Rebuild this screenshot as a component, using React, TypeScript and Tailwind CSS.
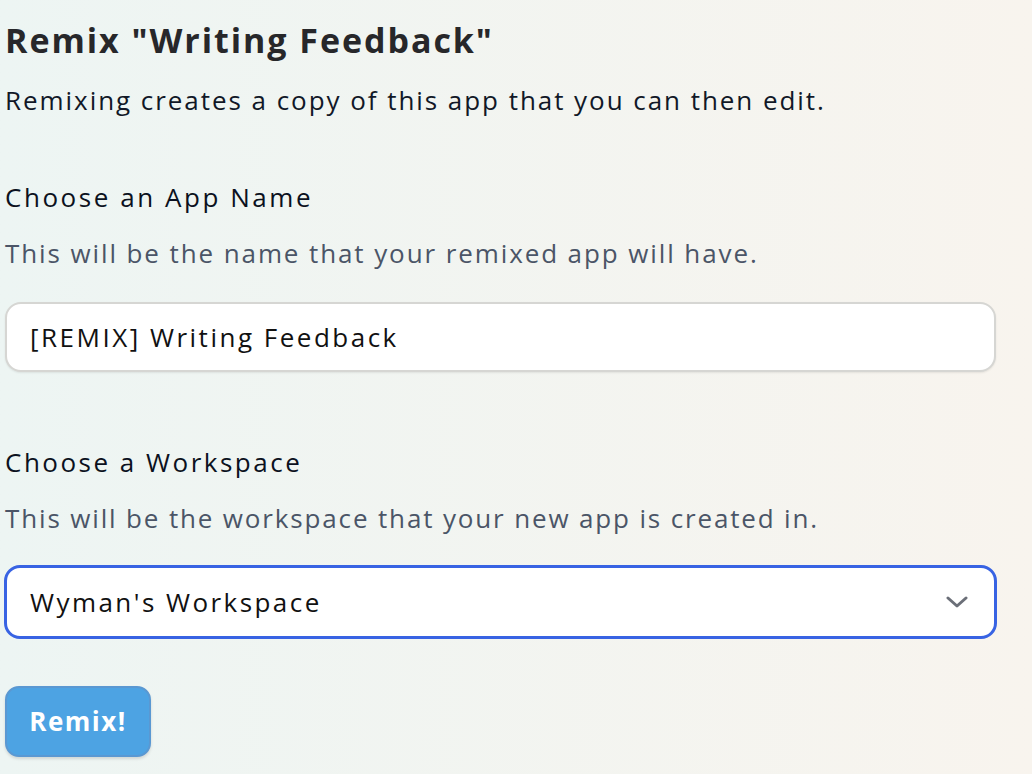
import React from "react";

export default function App() {
  const font = { fontFamily: '"Open Sans", "Liberation Sans", sans-serif' };
  return (
    <div
      className="min-h-screen w-full bg-gradient-to-r from-[#edf5f3] to-[#f8f4ee] pl-[5px] pr-[36px]"
      style={font}
    >
      <div className="flex flex-col">
        <h1 className="mt-[20px] h-[40px] text-[34px] leading-[40px] font-bold text-[#27272a] tracking-[1.95px]">
          Remix "Writing Feedback"
        </h1>
        <p className="mt-[22px] h-[36px] text-[26px] leading-[36px] text-[#111827] tracking-[1.95px]">
          Remixing creates a copy of this app that you can then edit.
        </p>

        <h2 className="mt-[61px] h-[36px] text-[26px] leading-[36px] font-medium text-[#0b1120] tracking-[2.55px]">
          Choose an App Name
        </h2>
        <p className="mt-[20px] h-[36px] text-[26px] leading-[36px] text-[#4b5567] tracking-[1.9px]">
          This will be the name that your remixed app will have.
        </p>
        <div className="mt-[31px] flex h-[70px] w-[991px] items-center rounded-[16px] border-2 border-[#d6d6d3] bg-white pl-[23px] shadow-[0_1px_2px_rgba(0,0,0,0.08)]">
          <span className="text-[26px] text-[#111111] tracking-[2.5px]">[REMIX] Writing Feedback</span>
        </div>

        <h2 className="mt-[72px] h-[36px] text-[26px] leading-[36px] font-medium text-[#0b1120] tracking-[2.5px]">
          Choose a Workspace
        </h2>
        <p className="mt-[20px] h-[36px] text-[26px] leading-[36px] text-[#4b5567] tracking-[1.85px]">
          This will be the workspace that your new app is created in.
        </p>
        <div className="-ml-[1px] mt-[29px] flex h-[74px] w-[993px] items-center justify-between rounded-[16px] border-[3px] border-[#3863e3] bg-white pl-[23px] pr-[26px]">
          <span className="text-[26px] text-[#111111] tracking-[2.45px]">Wyman's Workspace</span>
          <svg width="22" height="12" viewBox="0 0 22 12" fill="none">
            <path d="M2 2 L11 10 L20 2" stroke="#6b6f78" strokeWidth="3" strokeLinecap="round" strokeLinejoin="round" />
          </svg>
        </div>

        <button className="mt-[47px] flex h-[71px] w-[146px] items-center justify-center rounded-[14px] border-2 border-[#5a98d2] bg-[#4da3e3] text-[26px] font-bold text-white tracking-[1.5px] shadow-[0_2px_3px_rgba(0,0,0,0.12)]">
          Remix!
        </button>
      </div>
    </div>
  );
}
